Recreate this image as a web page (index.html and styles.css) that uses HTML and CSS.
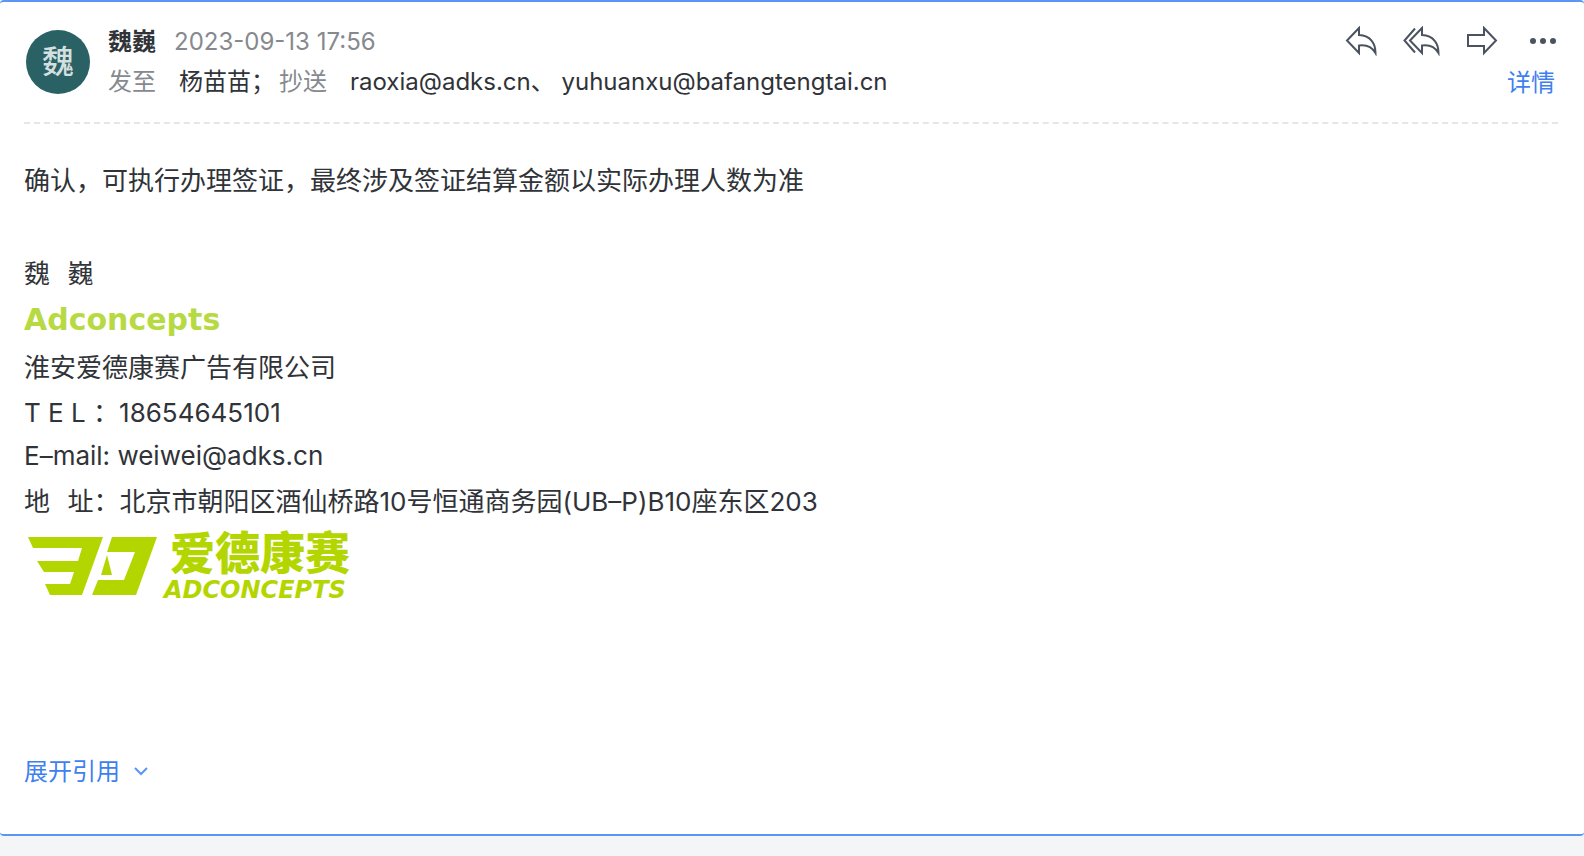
FILE: index.html
```html
<!DOCTYPE html>
<html lang="zh-CN">
  <head>
    <meta charset="utf-8">
    <title>邮件</title>
    <link rel="stylesheet" href="styles.css">
  </head>
  <body>
    <article class="mail">
      <header class="mail-header">
        <div class="avatar">魏</div>
        <div class="mail-info">
          <div class="info-row">
            <strong class="sender">魏巍</strong>
            <time class="muted" datetime="2023-09-13T17:56">2023-09-13 17:56</time>
          </div>
          <div class="info-row">
            <span class="muted">发至</span>
            <span class="recipient">杨苗苗；</span>
            <span class="muted cc">抄送</span>
            <span class="recipient">raoxia@adks.cn、 yuhuanxu@bafangtengtai.cn</span>
          </div>
        </div>
        <div class="mail-side">
          <div class="actions">
            <button type="button" aria-label="回复">
              <svg width="32" height="30" viewBox="0 0 32 30"><path d="M14 2 2 14.500 14 27V19.500C21 18.500 27 21 30.500 27 30.500 18 26 9.500 14 9Z"/></svg>
            </button>
            <button type="button" aria-label="全部回复">
              <svg width="37" height="30" viewBox="0 0 37 30"><path d="M12 2.500 1.500 14.500 12 26.500"/><path d="M19 2 7 14.500 19 27V19.500C26 18.500 32 21 35.500 27 35.500 18 31 9.500 19 9Z"/></svg>
            </button>
            <button type="button" aria-label="转发">
              <svg width="32" height="30" viewBox="0 0 32 30"><path d="M18 2 30 14.500 18 27V20H2V9H18Z"/></svg>
            </button>
            <button type="button" class="more" aria-label="更多">
              <svg width="28" height="30" viewBox="0 0 28 30"><circle cx="4" cy="15" r="3"/><circle cx="14" cy="15" r="3"/><circle cx="24" cy="15" r="3"/></svg>
            </button>
          </div>
          <a class="link" href="#detail">详情</a>
        </div>
      </header>

      <div class="mail-body">
        <p class="message">确认，可执行办理签证，最终涉及签证结算金额以实际办理人数为准</p>
        <div class="signature">
          <p class="spaced">魏 &nbsp; 巍</p>
          <p class="brand">Adconcepts</p>
          <p>淮安爱德康赛广告有限公司</p>
          <p class="contact">T E L ：18654645101</p>
          <p class="contact">E–mail: weiwei@adks.cn</p>
          <p><span class="spaced">地 &nbsp; 址：</span>北京市朝阳区酒仙桥路10号恒通商务园(UB–P)B10座东区203</p>
        </div>
        <div class="logo">
          <svg width="130" height="60" viewBox="0 0 130 60">
            <path d="M0 0H75L54 58H22L17 47H42L46 35H16L9 24H50L54 11H5Z"/>
            <path d="M84 0H129L108 58H64L70 43H96L107 15H79Z"/>
            <path d="M79 18 84 38H73Z"/>
          </svg>
          <div class="logo-text">
            <span class="logo-cn">爱德康赛</span>
            <span class="logo-en">ADCONCEPTS</span>
          </div>
        </div>
      </div>

      <button type="button" class="link quote-toggle">
        展开引用
        <svg width="16" height="12" viewBox="0 0 16 12"><path d="M2 2 8 8 14 2"/></svg>
      </button>
    </article>
  </body>
</html>
```
FILE: styles.css
```css
body {
  margin: 0;
  background-color: #f4f5f7;
  color: #303338;
  font-family: Inter, "Noto Sans CJK SC", sans-serif;
  font-size: 24px;
}

p {
  margin: 0;
}

button {
  padding: 0;
  border: none;
  background: none;
  font: inherit;
  cursor: pointer;
}

svg {
  display: block;
}

.mail {
  padding: 20px 26px 43px 24px;
  border-top: 2px solid #5b95f5;
  border-bottom: 2px solid #5b95f5;
  border-radius: 4px;
  background-color: white;
}

.mail-header {
  display: flex;
  padding-bottom: 20px;
  border-bottom: 2px dashed #e6e6e6;
}

.avatar {
  width: 64px;
  height: 64px;
  margin: 8px 18px 0 2px;
  border-radius: 50%;
  background-color: #296164;
  color: #d4dfe0;
  font-size: 32px;
  font-weight: 500;
  line-height: 64px;
  text-align: center;
}

.mail-info {
  flex: 1;
}

.info-row {
  display: flex;
  line-height: 40px;
}

.sender {
  margin-right: 18px;
}

.muted {
  color: #86898e;
}

.recipient {
  margin-left: 23px;
}

.cc {
  margin-left: 4px;
}

.mail-side {
  display: flex;
  flex-direction: column;
  align-items: flex-end;
  gap: 4px;
}

.actions {
  display: flex;
  align-items: center;
  gap: 26px;
  height: 38px;
  margin-right: 1px;
}

.actions path {
  fill: none;
  stroke: #4b5360;
  stroke-width: 2;
}

.more {
  margin-left: 5px;
}

.more svg {
  fill: #4b5360;
}

.link {
  color: #407ff0;
  line-height: 38px;
  text-decoration: none;
}

.mail-side .link {
  margin-right: 3px;
}

.mail-body {
  padding-top: 34px;
  font-size: 26px;
  line-height: 46px;
}

.signature {
  padding-top: 45px;
}

.spaced {
  font-family: "Noto Sans CJK SC", sans-serif;
}

.brand {
  color: #b7da43;
  font-family: "DejaVu Sans", Verdana, sans-serif;
  font-size: 30px;
  font-weight: bold;
  line-height: 50px;
}

.contact {
  line-height: 43px;
}

.logo {
  display: flex;
  gap: 6px;
  padding: 12px 4px;
  color: #b4d600;
}

.logo svg {
  fill: #b4d600;
}

.logo-text {
  display: flex;
  flex-direction: column;
  gap: 10px;
}

.logo-cn {
  margin-left: 6px;
  font-size: 45px;
  font-weight: 900;
  line-height: 34px;
}

.logo-en {
  font-family: "DejaVu Sans", sans-serif;
  font-size: 24px;
  font-style: italic;
  font-weight: bold;
  line-height: 18px;
}

.quote-toggle {
  display: flex;
  align-items: center;
  gap: 13px;
  margin-top: 142px;
}

.quote-toggle path {
  fill: none;
  stroke: #5b95f5;
  stroke-width: 2;
}
```
